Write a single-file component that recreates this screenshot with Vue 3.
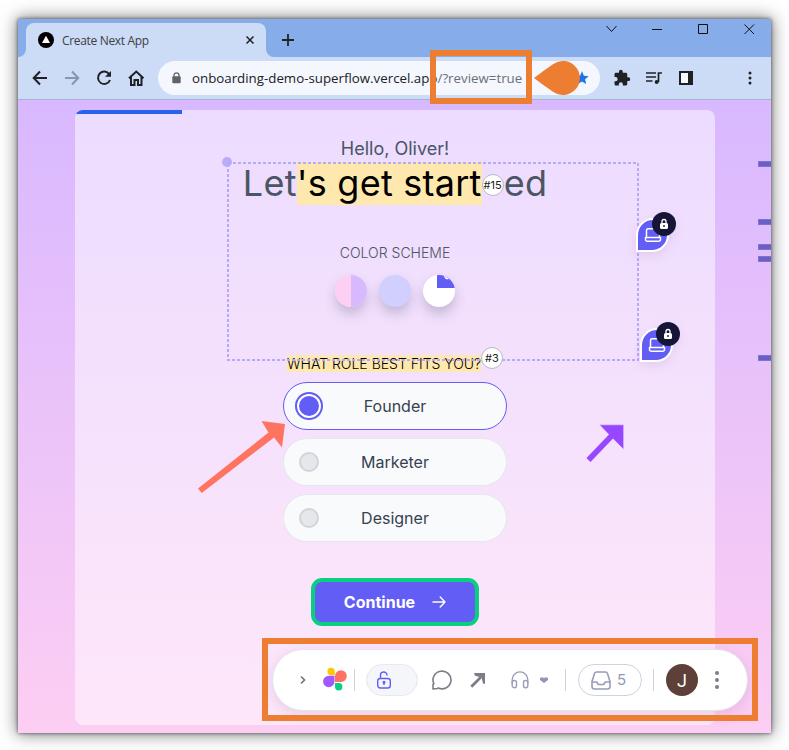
<script setup>
const roles = [
  { name: 'Founder', selected: true },
  { name: 'Marketer', selected: false },
  { name: 'Designer', selected: false },
]
const markers = [161, 219, 244, 256, 355]
const pins = [
  { x: 636, y: 212 },
  { x: 640, y: 322 },
]
</script>

<template>
  <div class="stage">
    <div class="window">
      <div class="tabstrip">
        <div class="tab">
          <svg class="favicon" width="16" height="16" viewBox="0 0 16 16"><circle cx="8" cy="8" r="8" fill="#000" /><path d="M8 3.800L12 11H4z" fill="#fff" /></svg>
          <span class="tab-title">Create Next App</span>
          <svg width="8" height="8" viewBox="0 0 8 8"><path d="M.5.5l7 7M7.500.5l-7 7" stroke="#202124" stroke-width="1.500" /></svg>
          <svg class="flare left" width="8" height="8" viewBox="0 0 8 8"><path d="M8 0v8H0A8 8 0 0 0 8 0z" fill="#ccdcf6" /></svg>
          <svg class="flare right" width="8" height="8" viewBox="0 0 8 8"><path d="M0 0v8h8A8 8 0 0 1 0 0z" fill="#ccdcf6" /></svg>
        </div>
        <svg class="plus" width="12" height="12" viewBox="0 0 12 12"><path d="M6 0v12M0 6h12" stroke="#202124" stroke-width="1.800" /></svg>
        <svg class="controls" width="150" height="16" viewBox="0 0 150 16" fill="none" stroke="#111" stroke-width="1">
          <path d="M.5 5l5 5.500 5-5.500M46 8.500h10M92.500 3.500h9v9h-9zM138.500 3.500l9.500 9.500M148 3.500l-9.500 9.500" />
        </svg>
      </div>
      <div class="navbar">
        <svg class="nav-icons" width="114" height="18" viewBox="0 0 114 18" fill="none" stroke="#202124" stroke-width="2">
          <path d="M15 9H2M8 2.500L1.700 9 8 15.500" />
          <path d="M33 9h13M40 2.500L46.300 9 40 15.500" stroke="#8795af" />
          <path d="M77.300 5.200A6.200 6.200 0 1 0 78 11" /><path d="M73 7.800h6V2z" fill="#202124" stroke="none" />
          <path d="M99 8v8h3.500v-5h3.500v5h3.500V8M97 9.300L104.250 2.600l7.250 6.700" />
        </svg>
        <div class="omnibox">
          <svg width="9" height="12" viewBox="0 0 9 12"><path d="M2 5V3.300a2.500 2.500 0 0 1 5 0V5" fill="none" stroke="#5f6368" stroke-width="1.300" /><rect x=".3" y="4.300" width="8.400" height="7" rx="1" fill="#5f6368" /></svg>
          <span class="url">onboarding-demo-superflow.vercel.app<i>/?review=true</i></span>
          <svg class="star" width="16" height="16" viewBox="0 0 24 24" fill="#1a73e8"><path d="M12 17.270L18.180 21l-1.640-7.030L22 9.240l-7.190-.61L12 2 9.190 8.630 2 9.240l5.460 4.730L5.820 21z" /></svg>
        </div>
        <div class="extensions">
          <svg width="18" height="18" viewBox="0 0 24 24" fill="#202124"><path d="M20.500 11H19V7c0-1.100-.9-2-2-2h-4V3.500a2.500 2.500 0 0 0-5 0V5H4c-1.100 0-2 .9-2 2v3.800h1.500a2.700 2.700 0 0 1 0 5.400H2V20c0 1.100.9 2 2 2h3.800v-1.500a2.700 2.700 0 0 1 5.400 0V22H17c1.100 0 2-.9 2-2v-4h1.500a2.500 2.500 0 0 0 0-5z" /></svg>
          <svg width="18" height="14" viewBox="0 0 18 14" fill="none" stroke="#202124" stroke-width="1.700"><path d="M1 2h10M1 6h10M1 10h6.500M13.500 11V2h3.500" /><circle cx="11.700" cy="11" r="2" fill="#202124" stroke="none" /></svg>
          <svg class="panel" width="14" height="14" viewBox="0 0 14 14"><path d="M1 1h12v12H1z" fill="#f5f8fe" stroke="#202124" stroke-width="2" /><path d="M9 1h4v12H9z" fill="#202124" /></svg>
          <svg class="kebab" width="4" height="14" viewBox="0 0 4 14" fill="#202124"><circle cx="2" cy="2" r="1.500" /><circle cx="2" cy="7" r="1.500" /><circle cx="2" cy="12" r="1.500" /></svg>
        </div>
      </div>
      <main class="page">
        <section class="card">
          <div class="progress"></div>
          <p class="hello">Hello, Oliver!</p>
          <h1>Let<mark>'s get start</mark><b class="note">#15</b>ed</h1>
          <p class="scheme-title">COLOR SCHEME</p>
          <div class="swatches">
            <span class="sw split"></span><span class="sw blue"></span>
            <span class="sw white"><svg width="32" height="32" viewBox="0 0 32 32"><path d="M14 0h18v13H14z" fill="#625df5" /><path d="M21.500 0q.5 4 4 3.500" stroke="#fff" stroke-width="1.500" fill="none" /></svg></span>
          </div>
          <div class="question"><mark>WHAT ROLE BEST FITS YOU?</mark></div>
          <div class="roles">
            <div v-for="r in roles" :key="r.name" class="role" :class="{ selected: r.selected }">
              <span class="radio"></span><span class="role-name">{{ r.name }}</span>
            </div>
          </div>
          <button class="continue"><span>Continue</span>
            <svg width="14" height="12" viewBox="0 0 14 12" fill="none" stroke="#fff" stroke-width="1.400" stroke-linecap="round" stroke-linejoin="round"><path d="M1 6h12M8.200 1L13 6l-4.800 5" /></svg>
          </button>
        </section>
      </main>
    </div>

    <svg class="selection" width="418" height="206" viewBox="0 0 418 206"><circle cx="5" cy="5" r="5" fill="#b8adfa" /><path d="M6 6H416V203H6z" fill="none" stroke="#b5aafa" stroke-width="2" stroke-dasharray="3 2" /></svg>
    <b class="note note-three">#3</b>

    <svg v-for="p in pins" :key="p.y" class="pin" :style="{ left: p.x + 'px', top: p.y + 'px' }" width="42" height="42" viewBox="0 0 42 42">
      <path d="M1 39V23A16 16 0 0 1 17 7h15V23A16 16 0 0 1 17 39z" fill="#625df5" stroke="#fff" stroke-width="2" />
      <path d="M10.500 25v-6.500a1.700 1.700 0 0 1 1.700-1.700h9.600a1.700 1.700 0 0 1 1.700 1.700V25M9.500 25.500h15v2a1.800 1.800 0 0 1-1.800 1.800H11.300a1.800 1.800 0 0 1-1.800-1.800z" fill="none" stroke="#fff" stroke-width="1.500" stroke-linejoin="round" />
      <circle cx="28" cy="12" r="12" fill="#171537" />
      <path d="M26 12V9.500a2 2 0 0 1 4 0V12" fill="none" stroke="#fff" stroke-width="1.300" /><rect x="24" y="11" width="8" height="6" rx="1.500" fill="#fff" /><circle cx="28" cy="14" r=".9" fill="#171537" />
    </svg>

    <span v-for="y in markers" :key="y" class="marker" :style="{ top: y + 'px' }"></span>

    <svg class="coral" width="90" height="74" viewBox="0 0 90 74" fill="#ff7461"><path d="M0 68.500L70.500 12.500 63.500 1 87 4 84 27.500 76 17.500 3.700 73z" /></svg>
    <svg class="violet" width="40" height="40" viewBox="0 0 40 40"><path d="M14 1h23.500v24L27 14.500 4.500 38l-4-4L23 10.500z" fill="#9747ff" /><path d="M14 .8h23.500V25" fill="none" stroke="#cfb0ff" stroke-width=".8" /></svg>

    <div class="dock">
      <svg class="chev" width="6" height="10" viewBox="0 0 6 10" fill="none" stroke="#73757d" stroke-width="1.700"><path d="M1 1.500L4.500 5 1 8.500" /></svg>
      <svg class="logo" width="24" height="24" viewBox="0 0 24 24">
        <path d="M11.800 8.200H8.500A3.700 3.700 0 1 1 11.800 4.500z" fill="#ffc700" />
        <path d="M12 15V9.200a5.900 5.900 0 1 1 6 5.800z" fill="#ff7262" />
        <path d="M11.500 8.800H6a5.700 5.700 0 1 0 5.500 5.700z" fill="#a259ff" />
        <path d="M12 16h4a3.700 3.700 0 1 1-4 3.700z" fill="#0acf83" />
      </svg>
      <i class="rule r1"></i>
      <span class="switch"><svg width="16" height="18" viewBox="0 0 16 18" fill="none" stroke="#625df5" stroke-width="1.400" stroke-linecap="round"><rect x="1.700" y="7.500" width="12.600" height="9.500" rx="2.500" /><path d="M4.500 7V4.500A3.200 3.200 0 0 1 11 4" /><path d="M8 11.500v2" stroke-width="1.300" /><circle cx="8" cy="11.300" r=".8" fill="#625df5" /></svg></span>
      <svg class="chat" width="20" height="20" viewBox="0 0 20 20" fill="none" stroke="#7d7d87" stroke-width="1.600" stroke-linejoin="round"><path d="M1 19v-4.600l.9-.6A9 8.800 0 1 1 6.300 18L5.500 18.500z" /></svg>
      <svg class="arrow" width="16" height="16" viewBox="0 0 16 16"><path d="M1.300 14.700L11 5" stroke="#7d7d87" stroke-width="2.700" /><path d="M4 1h11v11l-2-.5-1.500-6-6.500-1.700z" fill="#7d7d87" /></svg>
      <svg class="phones" width="18" height="18" viewBox="0 0 18 18" fill="none" stroke="#989db9" stroke-width="1.400"><path d="M1.200 13V8.700a7.800 7.800 0 0 1 15.600 0V13" /><rect x="1.200" y="9.500" width="4.300" height="7.200" rx="2" /><rect x="12.500" y="9.500" width="4.300" height="7.200" rx="2" /></svg>
      <svg class="caret" width="8" height="6" viewBox="0 0 8 6" fill="#9096b7"><path d="M0 1.600Q1 0 2.500.3L4 1.300 5.500.3Q7 0 8 1.600V3L4 6 0 3z" /></svg>
      <i class="rule r2"></i>
      <span class="inbox"><svg width="20" height="19" viewBox="0 0 20 19" fill="none" stroke="#989db9" stroke-width="1.600" stroke-linejoin="round"><path d="M1 10.500L3.500 2.500Q4 1 5.600 1h8.800q1.600 0 2.100 1.500L19 10.500v5q0 2.500-2.500 2.500h-13Q1 18 1 15.500zM1 11h4.800l1.500 2.500h5.400l1.500-2.500H19" /></svg><span class="count">5</span></span>
      <i class="rule r3"></i>
      <span class="avatar">J</span>
      <svg class="more" width="4" height="18" viewBox="0 0 4 18" fill="#7d7d87"><circle cx="2" cy="2" r="2" /><circle cx="2" cy="9" r="2" /><circle cx="2" cy="16" r="2" /></svg>
    </div>

    <div class="frame url-frame"></div>
    <div class="frame dock-frame"></div>
    <svg class="callout" width="46" height="34" viewBox="0 0 46 34"><path d="M0 17Q9 10 19 3.200A17 17 0 1 1 19 30.800Q9 24 0 17z" fill="#ed7d31" /></svg>
  </div>
</template>

<style>
body { margin: 0; background: #fff; }
</style>
<style scoped>
* { box-sizing: border-box; }
svg { display: block; flex: none; }
p, h1 { margin: 0; font-weight: 400; }
.stage { position: relative; width: 789px; height: 750px; padding: 19px 18px 17px; overflow: hidden; font-family: Inter, sans-serif; color: #4b5563; }
.window { width: 753px; height: 714px; box-shadow: 0 0 16px 1px rgba(0,0,0,.5), 0 0 4px rgba(0,0,0,.6); background: #ccdcf6; }
.tabstrip { height: 38px; background: #86ace9; display: flex; align-items: flex-start; padding-left: 8px; }
.tab { position: relative; display: flex; align-items: center; width: 240px; height: 34px; margin-top: 4px; padding: 0 12px; background: #ccdcf6; border-radius: 8px 8px 0 0; }
.flare { position: absolute; bottom: 0; }
.left { left: -8px; }
.right { right: -8px; }
.tab-title { flex: 1; margin-left: 8px; font: 12px "Open Sans", sans-serif; letter-spacing: -.33px; color: #3c4043; white-space: nowrap; }
.plus { margin: 15px 0 0 16px; }
.controls { margin: 2px 0 0 312px; }
.navbar { height: 43px; display: flex; align-items: center; border-bottom: 1px solid #a5b2d2; padding-left: 14px; }
.omnibox { display: flex; align-items: center; width: 442px; height: 34px; margin-left: 12px; padding: 0 10px 0 14px; border-radius: 17px; background: #f4f7fd; }
.url { flex: 1; margin-left: 11px; font: 13.3px "Open Sans", sans-serif; color: #202124; white-space: nowrap; }
.url i { font-style: normal; color: #6b6f76; }
.extensions { display: flex; align-items: center; margin-left: 13px; gap: 14px; }
.panel { margin-left: 2px; }
.kebab { margin-left: 41px; }
.page { height: 633px; padding: 10px 56px 8px 57px; background: linear-gradient(#d8b8ff, #fdcef3); }
.card { height: 615px; border-radius: 8px; overflow: hidden; background: rgba(255,255,255,.5); display: flex; flex-direction: column; align-items: center; }
.progress { width: 107px; height: 4px; background: #2563eb; align-self: flex-start; }
.hello { margin-top: 21px; font-size: 18px; line-height: 28px; }
h1 { display: flex; align-items: center; font-size: 36px; line-height: 43px; letter-spacing: .25px; margin-top: -1px; white-space: nowrap; }
mark { background: #fee8ad; color: #000; }
.note { display: inline-flex; align-items: center; justify-content: center; width: 22px; height: 22px; border: 1px solid #b9b9c2; border-radius: 50%; background: #fff; color: #222; font: 400 11px Inter, sans-serif; letter-spacing: 0; }
h1 .note { margin: 2px 0 0; }
.scheme-title { margin-top: 38px; font-size: 14px; line-height: 20px; font-weight: 300; }
.swatches { display: flex; gap: 12px; margin-top: 12px; }
.sw { width: 32px; height: 32px; border-radius: 50%; overflow: hidden; box-shadow: 0 7px 12px rgba(75,75,110,.26); }
.split { background: linear-gradient(90deg, #fccff3 50%, #d8b8ff 50%); }
.blue { background: #d0cffe; }
.white { background: #fff; }
.question { margin-top: 48px; height: 17px; width: 224px; padding-left: 4px; font-size: 14px; line-height: 17px; font-weight: 300; white-space: nowrap; }
.roles { display: flex; flex-direction: column; gap: 8px; margin-top: 10px; }
.role { display: flex; align-items: center; width: 224px; height: 48px; padding: 0 12px; border: 1px solid #e5e7eb; border-radius: 24px; background: #f9fafc; color: #374151; font-size: 16px; }
.role-name { flex: 1; text-align: center; margin-right: 26px; }
.radio { width: 20px; height: 20px; margin: 0 3px; border: 2px solid #d1d5db; border-radius: 50%; background: #e5e7eb; }
.selected { border-color: #625df5; }
.selected .radio { background: #625df5; border-color: #625df5; box-shadow: 0 0 0 2px #fff, 0 0 0 4px #625df5; }
.continue { display: flex; align-items: center; justify-content: center; gap: 17px; width: 168px; height: 48px; margin-top: 36px; padding: 0; border: 4px solid #0acf83; border-radius: 11px; background: #625df5; color: #fff; font: 700 16px Inter, sans-serif; }
.selection { position: absolute; left: 222px; top: 157px; }
.note-three { position: absolute; left: 481px; top: 347px; }
.pin { position: absolute; overflow: visible; filter: drop-shadow(0 4px 5px rgba(90,50,120,.1)); }
.marker { position: absolute; left: 758px; width: 13px; height: 6px; background: #6b5fc7; border: 1px solid #8171cf; border-right: 0; border-radius: 1px 0 0 1px; }
.coral { position: absolute; left: 198px; top: 420px; }
.violet { position: absolute; left: 586px; top: 424px; }
.dock { position: absolute; left: 272px; top: 649px; width: 476px; height: 62px; display: flex; align-items: center; border: 1px solid #e4e2ec; border-radius: 31px; background: #fff; box-shadow: 0 4px 14px rgba(80,30,110,.12); }
.chev { margin-left: 27px; }
.logo { margin-left: 17px; margin-top: -3px; }
.rule { width: 1px; height: 22px; background: #d1d1da; }
.r1 { margin-left: 7px; }
.switch { display: flex; align-items: center; width: 52px; height: 32px; margin-left: 11px; padding-left: 9px; border: 1px solid #e8e8ee; border-radius: 16px; background: #f5f6fa; }
.chat { margin-left: 14px; }
.arrow { margin-left: 18px; }
.phones { margin-left: 25px; }
.caret { margin-left: 11px; }
.r2 { margin-left: 17px; }
.inbox { display: flex; align-items: center; gap: 6px; width: 64px; height: 32px; margin-left: 12px; padding-left: 12px; border: 1px solid #d1d1df; border-radius: 16px; color: #9298b6; font-size: 15px; }
.count { margin-top: -2px; }
.r3 { margin-left: 11px; }
.avatar { display: flex; align-items: center; justify-content: center; width: 32px; height: 32px; margin-left: 12px; border-radius: 50%; background: #5d4037; color: #fff; font: 18px Roboto, sans-serif; }
.more { margin-left: 17px; }
.frame { position: absolute; border: 6px solid #ed7d31; }
.url-frame { left: 430px; top: 50px; width: 102px; height: 54px; }
.dock-frame { left: 262px; top: 638px; width: 496px; height: 83px; }
.callout { position: absolute; left: 534px; top: 61px; }
</style>
